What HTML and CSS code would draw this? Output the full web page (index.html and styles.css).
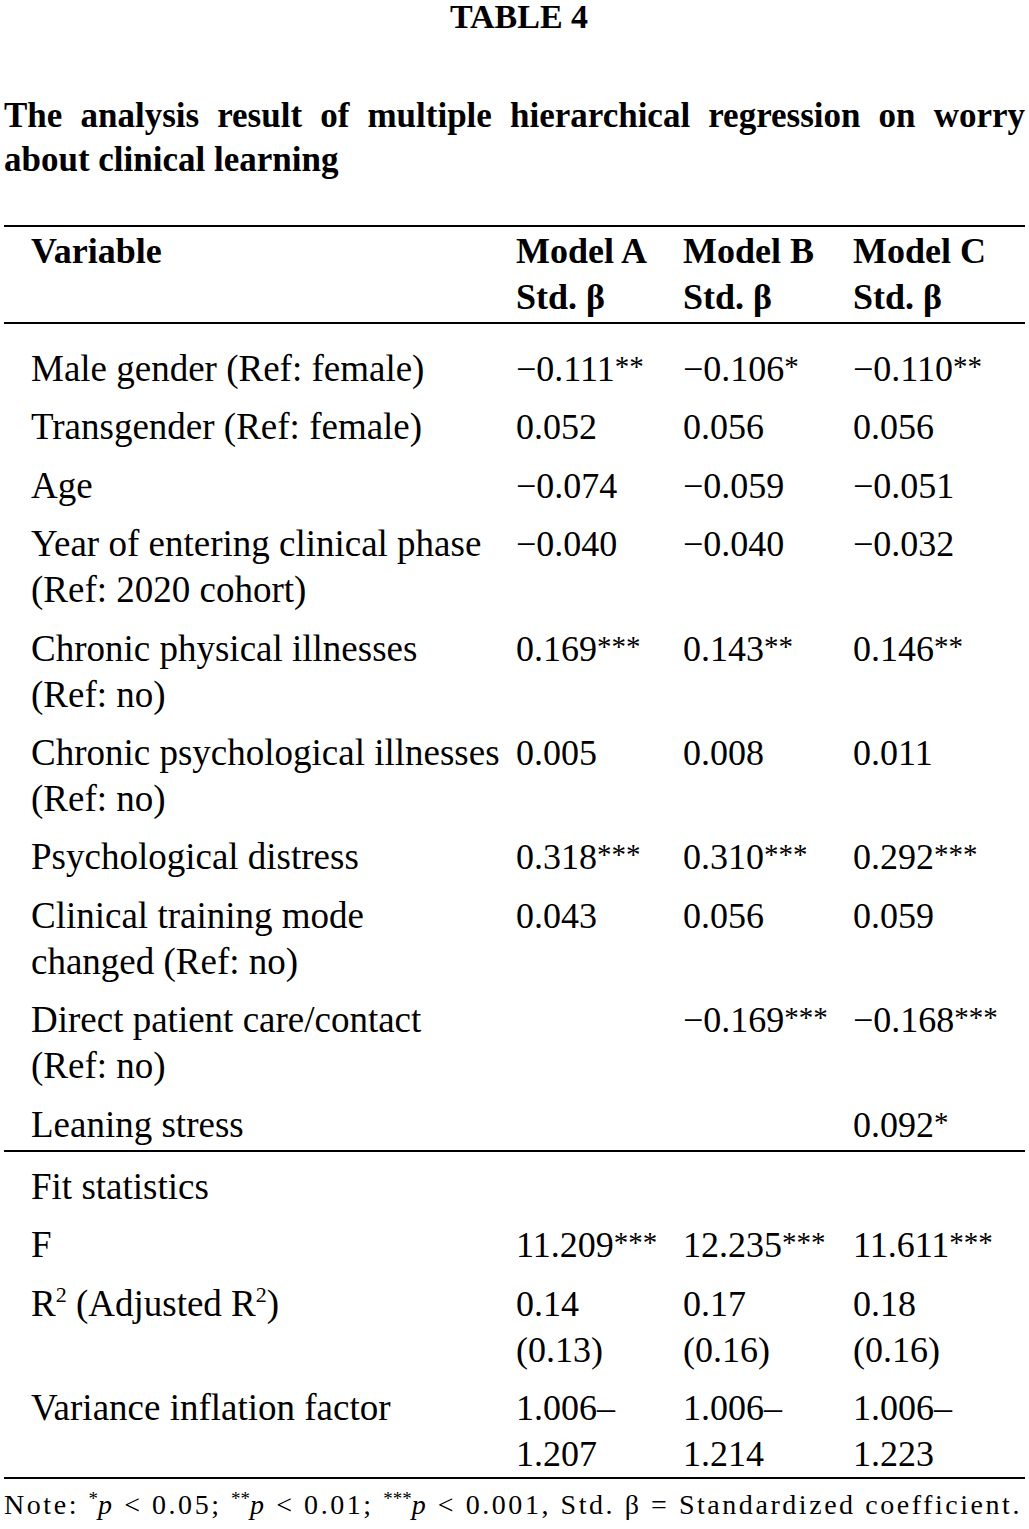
FILE: index.html
```html
<!DOCTYPE html>
<html lang="en">
<head>
<meta charset="utf-8">
<title>Table 4</title>
<link rel="stylesheet" href="styles.css">
</head>
<body>
<div class="page">
  <h1 class="title">TABLE 4</h1>
  <div class="caption">
    <span class="caption-line">The analysis result of multiple hierarchical regression on worry</span>
    <span class="caption-last">about clinical learning</span>
  </div>
  <table class="reg">
    <colgroup>
      <col class="c-var">
      <col class="c-a">
      <col class="c-b">
      <col class="c-c">
    </colgroup>
    <thead>
      <tr>
        <th class="var">Variable</th>
        <th>Model A<br>Std. β</th>
        <th>Model B<br>Std. β</th>
        <th>Model C<br>Std. β</th>
      </tr>
    </thead>
    <tbody>
      <tr class="first">
        <td class="var">Male gender (Ref: female)</td>
        <td>−0.111<span class="sig">**</span></td>
        <td>−0.106<span class="sig">*</span></td>
        <td>−0.110<span class="sig">**</span></td>
      </tr>
      <tr>
        <td class="var">Transgender (Ref: female)</td>
        <td>0.052</td>
        <td>0.056</td>
        <td>0.056</td>
      </tr>
      <tr>
        <td class="var">Age</td>
        <td>−0.074</td>
        <td>−0.059</td>
        <td>−0.051</td>
      </tr>
      <tr>
        <td class="var">Year of entering clinical phase<br>(Ref: 2020 cohort)</td>
        <td>−0.040</td>
        <td>−0.040</td>
        <td>−0.032</td>
      </tr>
      <tr>
        <td class="var">Chronic physical illnesses<br>(Ref: no)</td>
        <td>0.169<span class="sig">***</span></td>
        <td>0.143<span class="sig">**</span></td>
        <td>0.146<span class="sig">**</span></td>
      </tr>
      <tr>
        <td class="var">Chronic psychological illnesses<br>(Ref: no)</td>
        <td>0.005</td>
        <td>0.008</td>
        <td>0.011</td>
      </tr>
      <tr>
        <td class="var">Psychological distress</td>
        <td>0.318<span class="sig">***</span></td>
        <td>0.310<span class="sig">***</span></td>
        <td>0.292<span class="sig">***</span></td>
      </tr>
      <tr>
        <td class="var">Clinical training mode<br>changed (Ref: no)</td>
        <td>0.043</td>
        <td>0.056</td>
        <td>0.059</td>
      </tr>
      <tr>
        <td class="var">Direct patient care/contact<br>(Ref: no)</td>
        <td></td>
        <td>−0.169<span class="sig">***</span></td>
        <td>−0.168<span class="sig">***</span></td>
      </tr>
      <tr class="ruled">
        <td class="var">Leaning stress</td>
        <td></td>
        <td></td>
        <td>0.092<span class="sig">*</span></td>
      </tr>
    </tbody>
    <tbody class="fit">
      <tr class="fit-head">
        <td class="var">Fit statistics</td>
        <td></td>
        <td></td>
        <td></td>
      </tr>
      <tr>
        <td class="var">F</td>
        <td>11.209<span class="sig">***</span></td>
        <td>12.235<span class="sig">***</span></td>
        <td>11.611<span class="sig">***</span></td>
      </tr>
      <tr>
        <td class="var">R<sup>2</sup> (Adjusted R<sup>2</sup>)</td>
        <td>0.14<br>(0.13)</td>
        <td>0.17<br>(0.16)</td>
        <td>0.18<br>(0.16)</td>
      </tr>
      <tr class="ruled last">
        <td class="var">Variance inflation factor</td>
        <td>1.006–<br>1.207</td>
        <td>1.006–<br>1.214</td>
        <td>1.006–<br>1.223</td>
      </tr>
    </tbody>
  </table>
  <p class="note">Note: <sup>*</sup><i>p</i> &lt; 0.05; <sup>**</sup><i>p</i> &lt; 0.01; <sup>***</sup><i>p</i> &lt; 0.001, Std. β = Standardized coefficient.</p>
</div>
</body>
</html>
```

FILE: styles.css
```css
html, body {
  margin: 0;
  padding: 0;
  background: #ffffff;
}

body {
  font-family: "Liberation Serif", "Times New Roman", serif;
  color: #000000;
}

.page {
  padding: 0 4px;
}

.title {
  margin: 0;
  padding-left: 9px;
  font-size: 34px;
  line-height: 34px;
  font-weight: bold;
  text-align: center;
}

.caption {
  margin-top: 60px;
  font-size: 35px;
  line-height: 44px;
  font-weight: bold;
}

.caption-line {
  display: block;
  text-align: justify;
  text-align-last: justify;
}

.caption-last {
  display: block;
}

.reg {
  margin-top: 43px;
  width: 100%;
  border-collapse: separate;
  border-spacing: 0;
  table-layout: fixed;
  border-top: 2px solid #000000;
  font-size: 36px;
  line-height: 46px;
}

.c-var { width: 512px; }
.c-a { width: 167px; }
.c-b { width: 170px; }
.c-c { width: 172px; }

.reg th {
  font-weight: bold;
  text-align: left;
  vertical-align: top;
  padding: 1px 0 2px 0;
  border-bottom: 2px solid #000000;
  white-space: nowrap;
}

.reg td {
  text-align: left;
  vertical-align: top;
  padding: 10px 0 2.4px 0;
  white-space: nowrap;
}

.reg .var {
  padding-left: 27px;
}

.reg td.var {
  font-size: 37px;
}

.reg tr.first td {
  padding-top: 22px;
}

.reg tr.fit-head td {
  padding-top: 12px;
}

.reg tr.ruled td {
  border-bottom: 2px solid #000000;
}

.reg tr.last td {
  padding-bottom: 0;
}

.sig {
  font-size: 29px;
  line-height: 0;
  vertical-align: 5px;
}

.reg sup {
  font-size: 22px;
  line-height: 0;
  vertical-align: 14px;
}

.note {
  margin: 8px 0 0 0;
  font-size: 28px;
  line-height: 36px;
  letter-spacing: 2.55px;
  white-space: nowrap;
}

.note sup {
  font-size: 19px;
  line-height: 0;
  vertical-align: 9px;
  letter-spacing: 0;
}

.note i {
  font-style: italic;
}
```
